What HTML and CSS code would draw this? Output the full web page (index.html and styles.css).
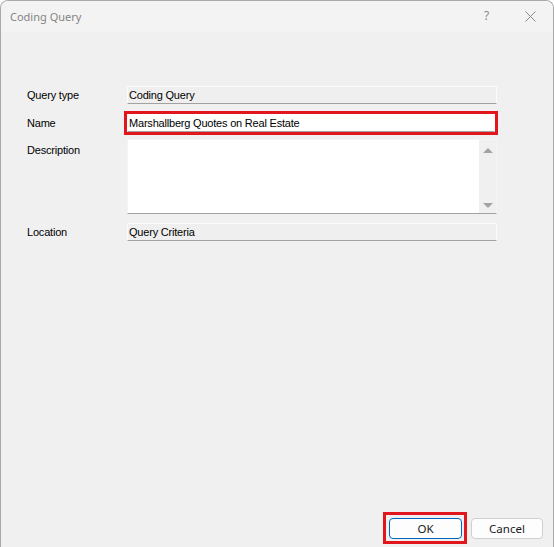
FILE: index.html
```html
<!DOCTYPE html>
<html lang="en">
<head>
    <meta charset="UTF-8">
    <title>Coding Query</title>
    <link rel="stylesheet" href="styles.css">
</head>
<body>
    <div class="dialog">
        <div class="title-bar">
            <span class="title">Coding Query</span>
            <span class="title-help">?</span>
            <span class="title-close">
                <svg width="11" height="11" viewBox="0 0 11 11">
                    <path d="M0.5 0.5 L10.5 10.5 M10.5 0.5 L0.5 10.5" stroke="#8a8a8a" stroke-width="1" fill="none"/>
                </svg>
            </span>
        </div>

        <div class="form">
            <div class="form-row row-type">
                <label class="form-label">Query type</label>
                <div class="field field-readonly">Coding Query</div>
            </div>
            <div class="form-row row-name">
                <label class="form-label">Name</label>
                <div class="highlight">
                    <div class="field field-edit">Marshallberg Quotes on Real Estate</div>
                </div>
            </div>
            <div class="form-row row-desc">
                <label class="form-label label-top">Description</label>
                <div class="field field-memo">
                    <div class="memo-text"></div>
                    <div class="scrollbar">
                        <span class="arrow-up"></span>
                        <span class="arrow-down"></span>
                    </div>
                </div>
            </div>
            <div class="form-row row-location">
                <label class="form-label">Location</label>
                <div class="field field-readonly">Query Criteria</div>
            </div>
        </div>

        <div class="footer">
            <div class="highlight highlight-btn">
                <button class="btn btn-default">OK</button>
            </div>
            <button class="btn">Cancel</button>
        </div>
    </div>
</body>
</html>
```

FILE: styles.css
```css
html, body {
    margin: 0;
    padding: 0;
    background: #ffffff;
}
body {
    width: 554px;
    height: 547px;
    overflow: hidden;
    font-family: 'Liberation Sans', Arial, sans-serif;
    font-size: 11px;
    color: #000;
}
.dialog {
    box-sizing: border-box;
    width: 554px;
    height: 547px;
    background: #f0f0f0;
    border: 1px solid #a9a9a9;
    border-bottom: none;
    border-radius: 8px 8px 0 0;
    display: flex;
    flex-direction: column;
    overflow: hidden;
}

/* title bar */
.title-bar {
    height: 31px;
    background: #f3f3f3;
    display: flex;
    align-items: center;
    font-family: 'Noto Sans', 'Open Sans', sans-serif;
    font-size: 11px;
    color: #858585;
}
.title {
    padding-left: 9px;
    flex: 1;
    margin-top: -1px;
}
.title-help {
    width: 12px;
    margin-right: 29px;
    font-size: 12px;
    color: #8a8a8a;
    margin-top: -2px;
}
.title-close {
    display: flex;
    margin-right: 17px;
    margin-top: -1px;
}

/* form */
.form {
    flex: 1;
    padding: 54px 0 0 26px;
    display: flex;
    flex-direction: column;
}
.form-row {
    display: flex;
    align-items: center;
}
.form-label {
    width: 100px;
    letter-spacing: -0.2px;
}
.label-top {
    align-self: flex-start;
    padding-top: 5px;
}
.row-name {
    margin-top: 7px;
}
.row-name .form-label {
    width: 97px;
}
.row-desc {
    margin-top: 4px;
}
.row-location {
    margin-top: 9px;
}

.field {
    box-sizing: border-box;
    width: 370px;
    height: 18px;
    padding: 0 1px;
    line-height: 16px;
    letter-spacing: -0.2px;
    border: 1px solid #fbfbfb;
    border-bottom-color: #a2a2a2;
}
.field-readonly {
    background: #efefef;
}
.field-edit {
    width: 368px;
    background: #fff;
    border-color: #fff;
    border-bottom-color: #a2a2a2;
}
.highlight {
    border: 3px solid #e2161d;
}
.field-memo {
    height: 75px;
    padding: 0;
    background: #fff;
    border-color: #f4f4f4;
    border-bottom-color: #a2a2a2;
    display: flex;
}
.memo-text {
    flex: 1;
}
.scrollbar {
    width: 17px;
    background: #f0f0f0;
    display: flex;
    flex-direction: column;
    align-items: center;
    justify-content: space-between;
    padding: 8px 0 5px;
}
.arrow-up,
.arrow-down {
    width: 0;
    height: 0;
    border-left: 5px solid transparent;
    border-right: 5px solid transparent;
}
.arrow-up {
    border-bottom: 5px solid #a3a3a3;
}
.arrow-down {
    border-top: 5px solid #a3a3a3;
}

/* footer buttons */
.footer {
    display: flex;
    justify-content: flex-end;
    align-items: center;
    gap: 4px;
    padding: 0 10px 3px 0;
}
.highlight-btn {
    padding: 3px 2px 2px 3px;
    display: flex;
}
.btn {
    box-sizing: border-box;
    width: 72px;
    height: 21px;
    padding: 0;
    background: #fdfdfd;
    border: 1px solid #d0d0d0;
    border-radius: 4px;
    font-family: 'Noto Sans', 'Open Sans', sans-serif;
    font-size: 11.5px;
    color: #1a1a1a;
}
.btn-default {
    width: 73px;
    border-color: #0067c0;
}
```
